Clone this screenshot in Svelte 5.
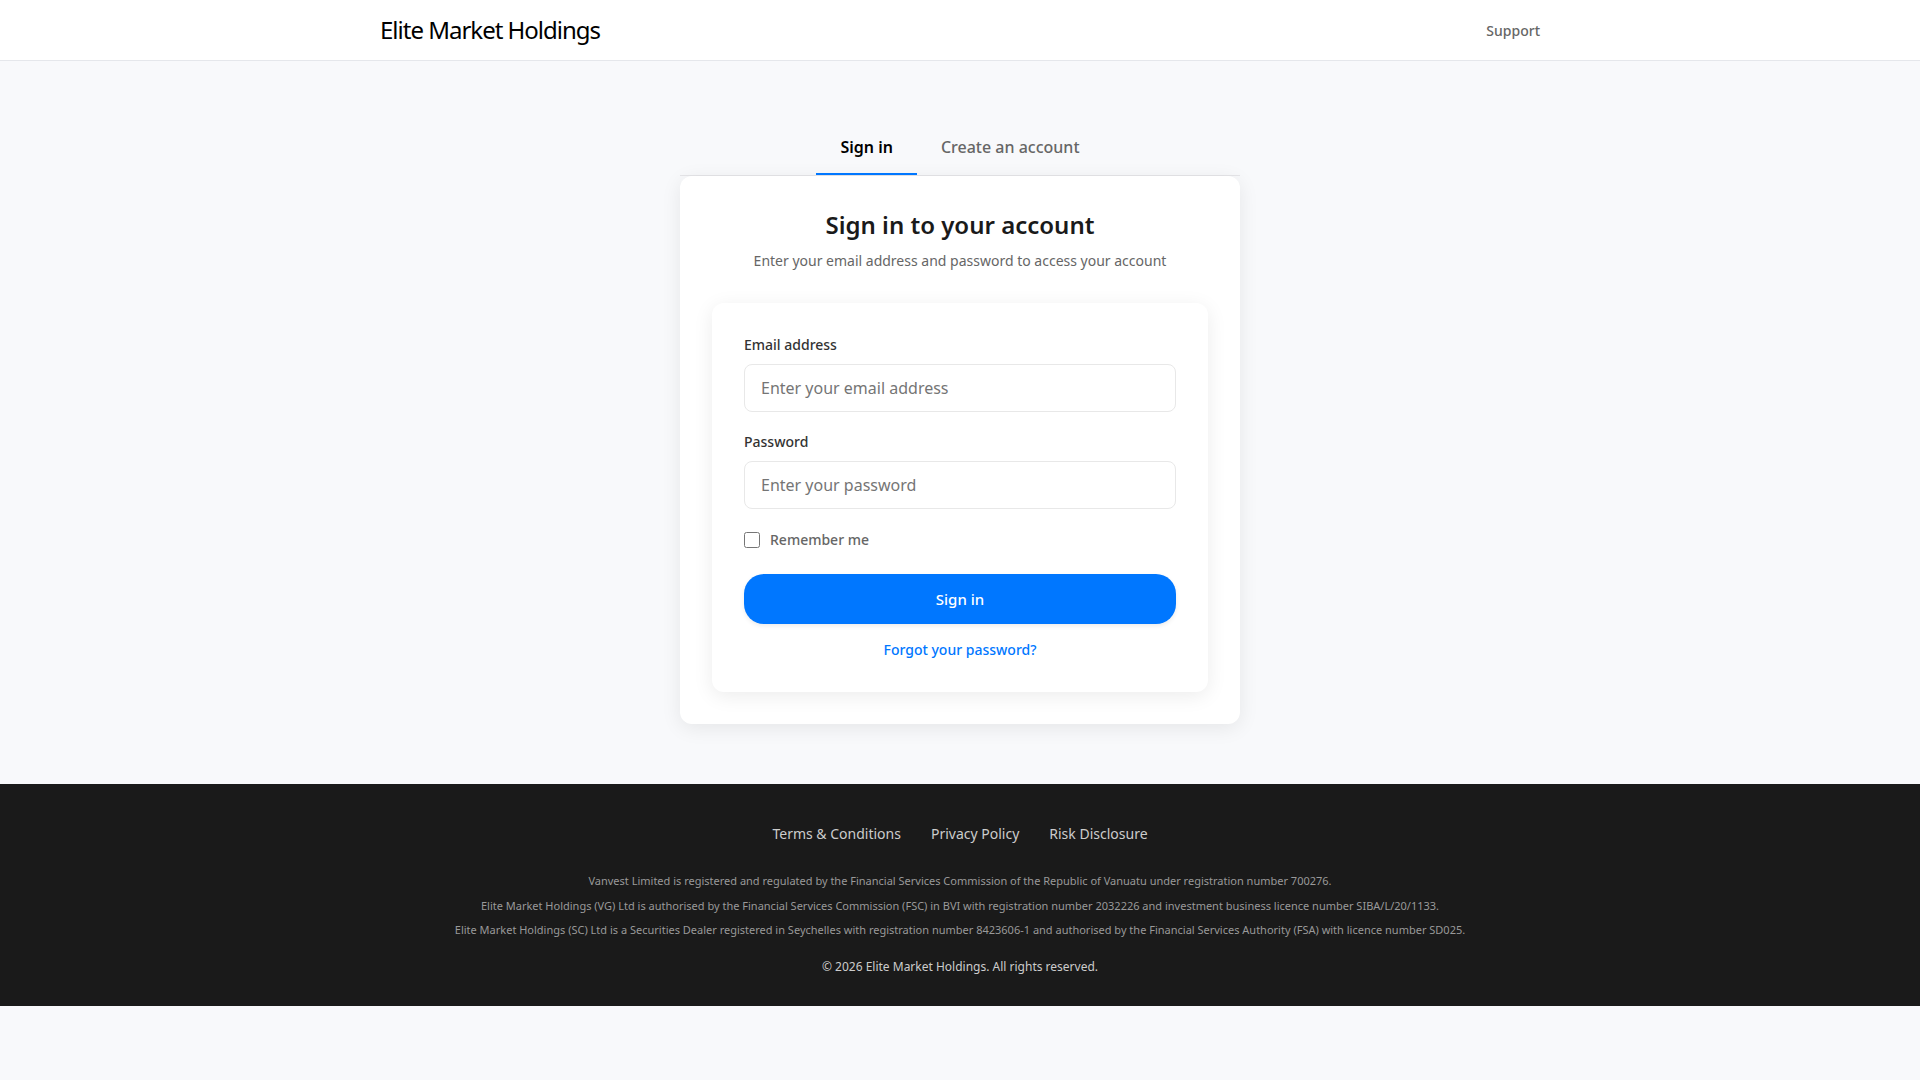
<script>
  let email = $state('');
  let password = $state('');
  let remember = $state(false);
</script>

<header>
  <div class="bar">
    <a class="brand" href="/">Elite Market Holdings</a>
    <nav><a class="support" href="/support">Support</a></nav>
  </div>
</header>

<main>
  <div class="panel">
    <nav class="tabs">
      <a class="tab active" href="/login">Sign in</a>
      <a class="tab" href="/register">Create an account</a>
    </nav>
    <section class="card">
      <h1>Sign in to your account</h1>
      <p class="intro">Enter your email address and password to access your account</p>
      <form>
        <label class="field-label" for="email">Email address</label>
        <input class="field" id="email" type="email" placeholder="Enter your email address" bind:value={email} />
        <label class="field-label" for="password">Password</label>
        <input class="field" id="password" type="password" placeholder="Enter your password" bind:value={password} />
        <label class="remember"><input type="checkbox" bind:checked={remember} />Remember me</label>
        <button type="submit">Sign in</button>
        <a class="forgot" href="/forgot">Forgot your password?</a>
      </form>
    </section>
  </div>
</main>

<footer>
  <nav class="links">
    <a href="/terms">Terms &amp; Conditions</a>
    <a href="/privacy">Privacy Policy</a>
    <a href="/risk">Risk Disclosure</a>
  </nav>
  <div class="legal">
    <p>Vanvest Limited is registered and regulated by the Financial Services Commission of the Republic of Vanuatu under registration number 700276.</p>
    <p>Elite Market Holdings (VG) Ltd is authorised by the Financial Services Commission (FSC) in BVI with registration number 2032226 and investment business licence number SIBA/L/20/1133.</p>
    <p>Elite Market Holdings (SC) Ltd is a Securities Dealer registered in Seychelles with registration number 8423606-1 and authorised by the Financial Services Authority (FSA) with licence number SD025.</p>
  </div>
  <p class="copy">© 2026 Elite Market Holdings. All rights reserved.</p>
</footer>

<style>
  :global(body) {
    background: #f8f9fb;
    font-family: 'Noto Sans', sans-serif;
    color: #1a1a1a;
    line-height: 1.5;
  }
  a { text-decoration: none; }
  h1, p { margin: 0; }
  header { background: #fff; border-bottom: 1px solid #e5e7eb; }
  .bar {
    box-sizing: border-box;
    max-width: 1200px;
    height: 60px;
    margin: 0 auto;
    padding: 0 20px;
    display: flex;
    align-items: center;
    justify-content: space-between;
  }
  .brand { font-size: 24px; letter-spacing: -1px; color: #000; }
  .support { font-size: 14px; font-weight: 500; line-height: 20px; color: #666; }
  main { padding: 60px 20px; }
  .panel { max-width: 560px; margin: 0 auto; }
  .tabs { display: flex; justify-content: center; border-bottom: 1px solid #e5e5e8; }
  .tab {
    padding: 14px 24px;
    font-size: 16px;
    font-weight: 500;
    color: #666;
    border-bottom: 2px solid transparent;
  }
  .tab.active { color: #000; font-weight: 600; border-bottom-color: #0077ff; }
  .card {
    padding: 32px;
    background: #fff;
    border-radius: 12px;
    box-shadow: 0 4px 20px rgba(0, 0, 0, 0.08);
    text-align: center;
  }
  h1 { font-size: 24px; font-weight: 600; line-height: 34px; }
  .intro { margin: 8px 0 32px; font-size: 14px; color: #666; }
  form {
    display: flex;
    flex-direction: column;
    padding: 32px;
    border-radius: 12px;
    box-shadow: 0 4px 20px rgba(0, 0, 0, 0.08);
    text-align: left;
  }
  .field-label {
    margin-bottom: 9px;
    font-size: 14px;
    font-weight: 500;
    line-height: 20px;
    color: #333;
  }
  .field {
    box-sizing: border-box;
    width: 100%;
    height: 48px;
    margin: 0 0 20px;
    padding: 0 16px;
    border: 1px solid #e8e8e8;
    border-radius: 8px;
    font: inherit;
    font-size: 16px;
    background: #fff;
  }
  .field::placeholder { color: #757575; }
  .remember {
    display: flex;
    align-items: center;
    gap: 10px;
    margin-bottom: 24px;
    font-size: 14px;
    font-weight: 500;
    color: #666;
  }
  .remember input { width: 16px; height: 16px; margin: 0; }
  button {
    height: 50px;
    border: 0;
    border-radius: 20px;
    background: #0077ff;
    box-shadow: 0 2px 4px rgba(0, 0, 0, 0.08);
    color: #fff;
    font: inherit;
    font-size: 15px;
    font-weight: 500;
  }
  .forgot {
    margin-top: 16px;
    text-align: center;
    font-size: 14px;
    font-weight: 500;
    line-height: 20px;
    color: #0077ff;
  }
  footer { padding: 40px 20px 30px; background: #1a1a1a; text-align: center; }
  .links {
    display: flex;
    justify-content: center;
    gap: 30px;
    margin-bottom: 29px;
    font-size: 14px;
    line-height: 20px;
  }
  .links a { color: #ccc; }
  .legal { font-size: 11px; color: #999; }
  .legal p { margin-bottom: 8px; }
  .copy { margin-top: 19px; font-size: 12px; color: #ccc; }
</style>
